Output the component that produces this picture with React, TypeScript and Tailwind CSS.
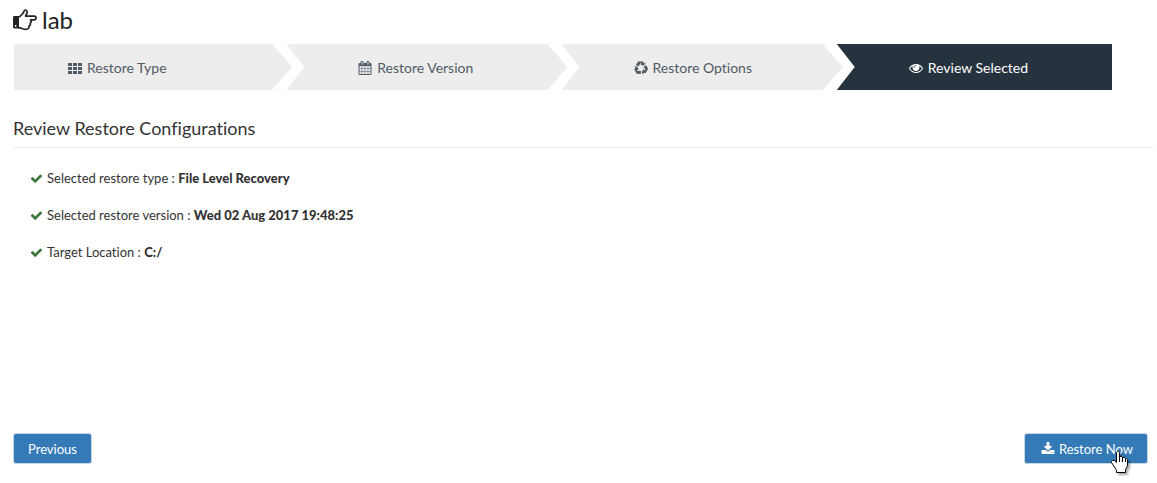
import type { ReactNode } from 'react'

function Icon({ d, className }: { d: string; className: string }) {
  return (
    <svg viewBox="0 0 1792 1792" fill="currentColor" aria-hidden="true" className={`inline-block shrink-0 ${className}`}>
      <path d={d} />
    </svg>
  )
}

const calendarPath =
  'M192 1664h288v-288h-288v288zm352 0h320v-288h-320v288zm-352-352h288v-320h-288v320zm352 0h320v-320h-320v320zm-352-384h288v-288h-288v288zm736 736h320v-288h-320v288zm-384-736h320v-288h-320v288zm768 736h288v-288h-288v288zm-384-352h320v-320h-320v320zm-352-864v-288q0-13-9.5-22.5t-22.5-9.5h-64q-13 0-22.5 9.5t-9.5 22.5v288q0 13 9.5 22.5t22.5 9.5h64q13 0 22.5-9.5t9.5-22.5zm736 864h288v-320h-288v320zm-384-384h320v-288h-320v288zm384 0h288v-288h-288v288zm32-480v-288q0-13-9.5-22.5t-22.5-9.5h-64q-13 0-22.5 9.5t-9.5 22.5v288q0 13 9.5 22.5t22.5 9.5h64q13 0 22.5-9.5t9.5-22.5zm384-64v1280q0 52-38 90t-90 38h-1408q-52 0-90-38t-38-90v-1280q0-52 38-90t90-38h128v-96q0-66 47-113t113-47h64q66 0 113 47t47 113v96h384v-96q0-66 47-113t113-47h64q66 0 113 47t47 113v96h128q52 0 90 38t38 90z'
const eyePath =
  'M1664 960q-152-236-381-353 61 104 61 225 0 185-131.5 316.5t-316.5 131.5-316.5-131.5-131.5-316.5q0-121 61-225-229 117-381 353 133 205 333.5 326.5t434.5 121.5 434.5-121.5 333.5-326.5zm-720-384q0-20-14-34t-34-14q-125 0-214.5 89.5t-89.5 214.5q0 20 14 34t34 14 34-14 14-34q0-86 61-147t147-61q20 0 34-14t14-34zm848 384q0 34-20 69-140 230-376.5 368.5t-499.5 138.5-499.5-139-376.5-368q-20-35-20-69t20-69q140-229 376.5-368t499.5-139 499.5 139 376.5 368q20 35 20 69z'
const checkPath =
  'M1671 566q0 40-28 68l-724 724-136 136q-28 28-68 28t-68-28l-136-136-362-362q-28-28-28-68t28-68l136-136q28-28 68-28t68 28l294 295 656-657q28-28 68-28t68 28l136 136q28 28 28 68z'
const downloadPath =
  'M1344 1344q0-26-19-45t-45-19-45 19-19 45 19 45 45 19 45-19 19-45zm256 0q0-26-19-45t-45-19-45 19-19 45 19 45 45 19 45-19 19-45zm128-224v320q0 40-28 68t-68 28h-1472q-40 0-68-28t-28-68v-320q0-40 28-68t68-28h465l135 136q58 56 136 56t136-56l136-136h464q40 0 68 28t28 68zm-325-569q17 41-14 70l-448 448q-18 19-45 19t-45-19l-448-448q-31-29-14-70 17-39 59-39h256v-448q0-26 19-45t45-19h256q26 0 45 19t19 45v448h256q42 0 59 39z'

function GridIcon() {
  return (
    <svg viewBox="0 0 14 11" fill="currentColor" aria-hidden="true" className="h-[11px] w-[14px] shrink-0">
      <path d="M0 0h4v3H0zM5 0h4v3H5zM10 0h4v3h-4zM0 4h4v3H0zM5 4h4v3H5zM10 4h4v3h-4zM0 8h4v3H0zM5 8h4v3H5zM10 8h4v3h-4z" />
    </svg>
  )
}

function RecycleIcon() {
  const arrow = 'M-2.8-6.6H2L3.2-4.6L5-5.4L3.1-2.6L-.8-2.9L.5-3.7L-.5-5L-2.5-1.6L-5.1-3.1Z'
  return (
    <svg viewBox="-7 -7 14 14" fill="currentColor" aria-hidden="true" className="size-[14px] shrink-0">
      <path d={arrow} />
      <path d={arrow} transform="rotate(120)" />
      <path d={arrow} transform="rotate(240)" />
    </svg>
  )
}

function HandIcon() {
  return (
    <svg viewBox="0 0 24 22" aria-hidden="true" className="h-[22px] w-6 shrink-0">
      <path
        d="M5.5 8C8 7.6 9 5 10.7 3.2C11.3 2.4 10.8 1 12.2 1C14.5 1 14.4 3.6 13.6 5C13.1 6 12.6 6.4 12.6 7.1H21.2C23.6 7.1 23.6 10.9 21.2 10.9H17.6C18.6 12 18.3 13.6 17.2 14.2C17.6 15.6 17 16.6 16 17.1C16.2 19.2 15 20.4 13 20.4C10 20.4 8.4 18.8 5.5 18.6"
        fill="none"
        stroke="currentColor"
        strokeWidth="1.7"
        strokeLinejoin="round"
      />
      <path
        d="M1.4 7H6V19.4H1.4Q0 19.4 0 18V8.4Q0 7 1.4 7ZM2.6 16a.9.9 0 1 0 0 1.8a.9.9 0 1 0 0-1.8Z"
        fill="currentColor"
        fillRule="evenodd"
      />
    </svg>
  )
}

function PointerCursor() {
  return (
    <svg
      viewBox="0 0 20 24"
      aria-hidden="true"
      className="pointer-events-none absolute top-[18px] left-[87px] h-6 w-5 drop-shadow-[2px_2px_1px_rgba(0,0,0,0.35)]"
    >
      <path
        d="M5.5 1.5L6.5 .5H7.5L8.5 1.5V5.5H10.5L11.5 6.5H13.5L14.5 7.5H15.5L16.5 8.5V14.5L15.5 16.5L14.5 18.5V21.5H5.5V19.5L4.5 17.5L2.5 14.5L.5 11.5V10.5L1.5 9.5H3.5L5.5 11.5Z"
        fill="#fff"
        stroke="#000"
      />
      <path d="M8.5 5V11M11.5 6V11M14.5 8V11" stroke="#000" />
    </svg>
  )
}

const steps = [
  { label: 'Restore Type', icon: <GridIcon /> },
  { label: 'Restore Version', icon: <Icon d={calendarPath} className="size-[14px]" /> },
  { label: 'Restore Options', icon: <RecycleIcon /> },
  { label: 'Review Selected', icon: <Icon d={eyePath} className="size-[14px]" /> },
]

const stepShape = (i: number) => {
  if (i === 0)
    return 'ml-[3px] -mr-1.5 pl-[54px] bg-[#ededed] text-[#4f5b66] [clip-path:polygon(0_0,calc(100%-20px)_0,100%_50%,calc(100%-20px)_100%,0_100%)]'
  if (i === steps.length - 1)
    return 'pl-[72px] bg-[#26323e] text-white [clip-path:polygon(0_0,100%_0,100%_100%,0_100%,18px_50%)]'
  return '-mr-1.5 pl-[72px] bg-[#ededed] text-[#4f5b66] [clip-path:polygon(0_0,calc(100%-20px)_0,100%_50%,calc(100%-20px)_100%,0_100%,18px_50%)]'
}

function SummaryRow({ label, children }: { label: string; children: ReactNode }) {
  return (
    <li className="flex items-center gap-1">
      <Icon d={checkPath} className="size-[13px] text-[#3c763d]" />
      <span>
        {label} : <strong className="font-black">{children}</strong>
      </span>
    </li>
  )
}

export default function App() {
  return (
    <main className="bg-white pt-1.5 pb-4 pl-[13px] font-['Lato',sans-serif] text-[13px] leading-5 text-[#333] [font-variant-ligatures:none]">
      <h1 className="flex h-7 items-center gap-[5px] text-[24px] leading-7 text-[#222]">
        <HandIcon />
        lab
      </h1>

      <nav aria-label="Restore steps" className="-ml-0.5 mt-2.5 mr-[45px]">
        <ol className="grid grid-cols-4">
          {steps.map(({ label, icon }, i) => (
            <li key={label} className="flex">
              <a
                href="#"
                aria-current={i === steps.length - 1 ? 'step' : undefined}
                className={`flex h-[46px] flex-1 items-center gap-[5px] pt-0.5 text-[14px] ${stepShape(i)}`}
              >
                {icon}
                {label}
              </a>
            </li>
          ))}
        </ol>
      </nav>

      <h2 className="mr-1 mt-7 border-b border-[#eee] pb-2 text-[18px] leading-[21px]">Review Restore Configurations</h2>

      <ul className="mt-5 flex flex-col gap-[17px] pl-[17px]">
        <SummaryRow label="Selected restore type">File Level Recovery</SummaryRow>
        <SummaryRow label="Selected restore version">Wed 02 Aug 2017 19:48:25</SummaryRow>
        <SummaryRow label="Target Location">C:/</SummaryRow>
      </ul>

      <div className="mr-[9px] mt-[171px] flex justify-between">
        <button type="button" className="h-[31px] rounded-[3px] border border-[#c5d8e8] bg-[#337ab7] px-3.5 text-white">
          Previous
        </button>
        <div className="relative">
          <button
            type="button"
            className="flex h-[31px] items-center gap-1 rounded-[3px] border border-[#c5d8e8] bg-[#337ab7] pr-3.5 pl-4 text-white"
          >
            <Icon d={downloadPath} className="size-[14px]" />
            Restore Now
          </button>
          <PointerCursor />
        </div>
      </div>
    </main>
  )
}
